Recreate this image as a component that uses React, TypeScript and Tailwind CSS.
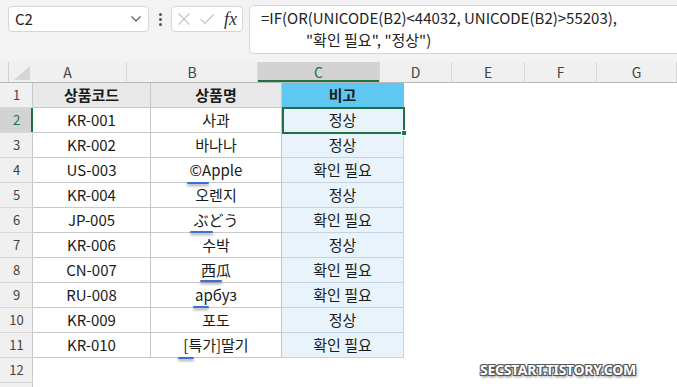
import React from "react";

const COLS = [
  { k: "A", w: 118 },
  { k: "B", w: 131 },
  { k: "C", w: 122 },
  { k: "D", w: 72 },
  { k: "E", w: 73 },
  { k: "F", w: 72 },
  { k: "G", w: 80 },
];

const DATA: [string, string, string][] = [
  ["KR-001", "사과", "정상"],
  ["KR-002", "바나나", "정상"],
  ["US-003", "©Apple", "확인 필요"],
  ["KR-004", "오렌지", "정상"],
  ["JP-005", "ぶどう", "확인 필요"],
  ["KR-006", "수박", "정상"],
  ["CN-007", "西瓜", "확인 필요"],
  ["RU-008", "арбуз", "확인 필요"],
  ["KR-009", "포도", "정상"],
  ["KR-010", "[특가]딸기", "확인 필요"],
];

const font = { fontFamily: '"Noto Sans CJK KR", "Noto Sans", sans-serif' };

function Marks() {
  const marks = [
    { x: 187, y: 182, w: 22 },
    { x: 190, y: 231, w: 23 },
    { x: 200, y: 280, w: 22 },
    { x: 193, y: 306, w: 16 },
    { x: 178, y: 357, w: 16 },
  ];
  return (
    <>
      {marks.map((m, i) => (
        <div
          key={i}
          className="absolute h-[2px] rounded-full bg-[#3b6fd6] shadow-[0_2px_3px_rgba(0,0,0,0.4)]"
          style={{ left: m.x, top: m.y, width: m.w }}
        />
      ))}
    </>
  );
}

export default function App() {
  return (
    <div
      className="relative w-[677px] h-[387px] overflow-hidden bg-white text-[#1a1a1a]"
      style={font}
    >
      {/* toolbar */}
      <div className="h-[62px] bg-[#f3f3f3] relative">
        <div className="absolute left-[8px] top-[6px] w-[141px] h-[26px] bg-white border border-[#d6d6d6] rounded-[4px] flex items-center justify-between pl-[6px] pr-[6px]">
          <span className="text-[15px] text-[#222]">C2</span>
          <svg width="12" height="8" viewBox="0 0 12 8">
            <path d="M1.5 1.5 L6 6 L10.5 1.5" fill="none" stroke="#555" strokeWidth="1.2" />
          </svg>
        </div>
        <div className="absolute left-[159px] top-[13px] flex flex-col gap-[2px]">
          <div className="w-[3px] h-[3px] rounded-full bg-[#555]" />
          <div className="w-[3px] h-[3px] rounded-full bg-[#555]" />
          <div className="w-[3px] h-[3px] rounded-full bg-[#555]" />
        </div>
        <div className="absolute left-[171px] top-[6px] w-[72px] h-[26px] bg-white border border-[#d6d6d6] rounded-[4px] flex items-center pl-[5px]">
          <svg width="14" height="14" viewBox="0 0 14 14">
            <path d="M1.5 1.5 L12.5 12.5 M12.5 1.5 L1.5 12.5" stroke="#c4c4c4" strokeWidth="1.2" />
          </svg>
          <svg width="16" height="14" viewBox="0 0 16 14" className="ml-[8px]">
            <path d="M1.5 7 L6 11.5 L14.5 2.5" fill="none" stroke="#c4c4c4" strokeWidth="1.2" />
          </svg>
          <span
            className="ml-[9px] text-[18px] italic text-[#333] leading-none"
            style={{ fontFamily: '"Liberation Serif", serif' }}
          >
            fx
          </span>
        </div>
        <div className="absolute left-[249px] top-[5px] w-[440px] h-[49px] bg-white border border-[#d6d6d6] rounded-[5px] text-[15px] leading-[22px] text-[#222] pt-[1px]">
          <div className="pl-[11px] whitespace-nowrap">=IF(OR(UNICODE(B2)&lt;44032, UNICODE(B2)&gt;55203),</div>
          <div className="pl-[56px] whitespace-nowrap">"확인 필요", "정상")</div>
        </div>
      </div>

      {/* column headers */}
      <div className="flex h-[21px] bg-[#f0f0f0] border-b border-[#b8b8b8]">
        <div className="w-[33px] border-r border-[#d0d0d0] relative">
          <svg width="16" height="14" viewBox="0 0 16 14" className="absolute left-[14px] top-[4px]">
            <path d="M16 0 L16 14 L0 14 Z" fill="#d6d6d6" />
          </svg>
        </div>
        {COLS.map((c) => (
          <div
            key={c.k}
            className={
              "flex items-center justify-center text-[14px] border-r border-[#d8d8d8] shrink-0 " +
              (c.k === "C"
                ? "bg-[#d3d3d3] text-[#1e7145] shadow-[inset_0_-2px_0_#1e7145]"
                : "text-[#444]")
            }
            style={{ width: c.w }}
          >
            {c.k}
          </div>
        ))}
      </div>

      {/* rows */}
      {Array.from({ length: 12 }).map((_, ri) => {
        const r = ri + 1;
        const isHeader = r === 1;
        const d = r >= 2 && r <= 11 ? DATA[r - 2] : null;
        const inTable = r <= 11;
        return (
          <div key={r} className="flex h-[25px]">
            <div
              className={
                "w-[33px] shrink-0 flex items-center justify-center text-[13px] border-b border-[#d8d8d8] " +
                (r === 2
                  ? "bg-[#d3d3d3] text-[#1e7145] shadow-[inset_-2px_0_0_#1e7145]"
                  : "bg-[#f0f0f0] text-[#444] shadow-[inset_-1px_0_0_#c8c8c8]")
              }
            >
              {r}
            </div>
            {inTable ? (
              <>
                <div
                  className={
                    "w-[118px] shrink-0 flex items-center justify-center text-[15px] border-r border-b border-[#c8c8c8] " +
                    (isHeader ? "bg-[#e8e8e8] font-bold text-[14px]" : "bg-white")
                  }
                >
                  {isHeader ? "상품코드" : d![0]}
                </div>
                <div
                  className={
                    "w-[131px] shrink-0 flex items-center justify-center text-[15px] border-r border-b border-[#c8c8c8] " +
                    (isHeader ? "bg-[#e8e8e8] font-bold text-[14px]" : "bg-white")
                  }
                >
                  {isHeader ? "상품명" : d![1]}
                </div>
                <div
                  className={
                    "w-[122px] shrink-0 flex items-center justify-center text-[15px] border-r border-b " +
                    (isHeader
                      ? "bg-[#5ec8f2] border-[#5ec8f2] font-bold text-[14px]"
                      : "bg-[#e8f3fb] border-[#c4d4de]")
                  }
                >
                  {isHeader ? "비고" : d![2]}
                </div>
              </>
            ) : null}
          </div>
        );
      })}
      <div className="flex h-[25px]">
        <div className="w-[33px] shrink-0 bg-[#f0f0f0] shadow-[inset_-1px_0_0_#c8c8c8]" />
      </div>

      {/* active cell */}
      <div className="absolute left-[282px] top-[107px] w-[123px] h-[27px] border-2 border-[#1e7145]" />
      <div className="absolute left-[401px] top-[130px] w-[6px] h-[6px] bg-[#1e7145] border border-white" />

      <Marks />

      {/* watermark */}
      <div
        className="absolute left-[480px] top-[359px] text-[14px] font-bold text-white tracking-[-0.3px] whitespace-nowrap"
        style={{
          fontFamily: '"Noto Sans", sans-serif',
          textShadow:
            "1px 1px 0 #555, -1px -1px 0 #555, 1px -1px 0 #555, -1px 1px 0 #555, 1px 2px 3px rgba(0,0,0,0.6)",
        }}
      >
        SECSTART.TISTORY.COM
      </div>
    </div>
  );
}
